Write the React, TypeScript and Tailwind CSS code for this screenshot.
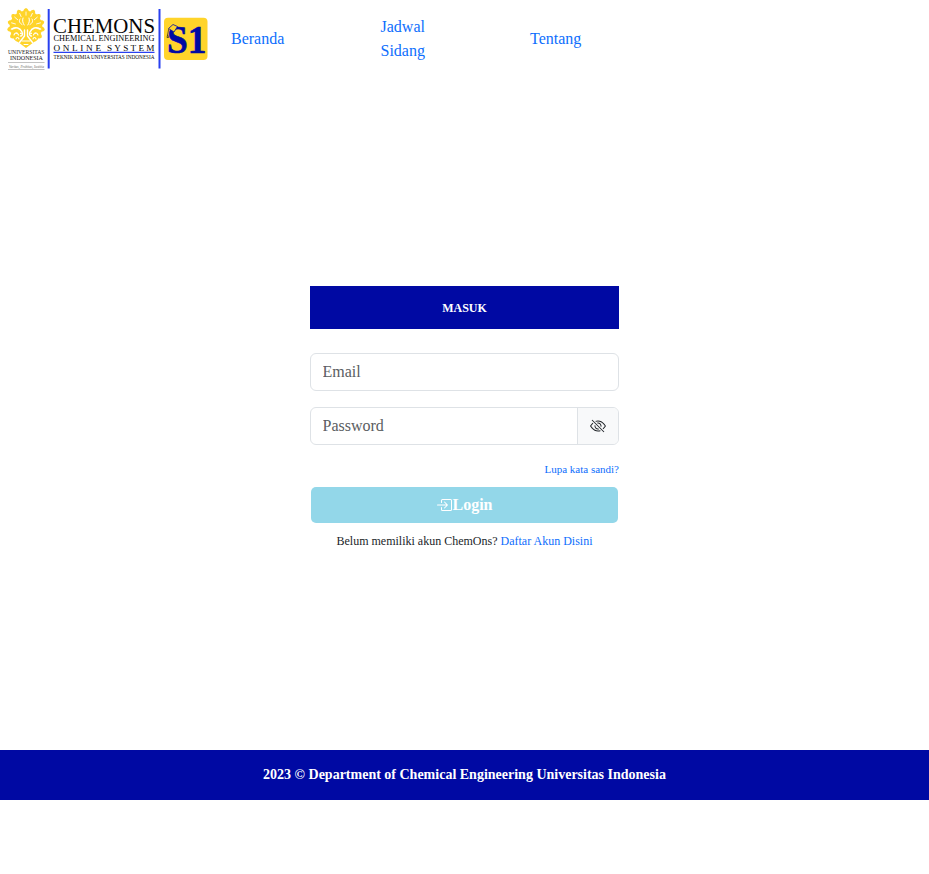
import React from "react";
import { BsBoxArrowInRight, BsEyeSlash } from "react-icons/bs";

const LEAF_ANGLES = [-124, -98, -74, -49, -25, 0, 25, 49, 74, 98, 124];

function Makara() {
  return (
    <g strokeLinecap="round" strokeLinejoin="round">
      {LEAF_ANGLES.map((angle) => (
        <g key={angle} transform={`rotate(${angle} 26 27)`}>
          <path fill="#ffd42a" d="M26 8c2.200 1 2.300 2 2.300 2.600 1.700.6 2 2 1.500 3.200.8 1.500 0 3-1 3.700L26 21l-2.800-3.500c-1-.7-1.800-2.200-1-3.700-.5-1.200-.2-2.600 1.500-3.200C23.700 10 23.800 9 26 8z" />
          <path d="M26 12v4" stroke="#fff" strokeWidth=".8" />
        </g>
      ))}
      <circle cx="26" cy="25" r="9.500" fill="#ffd42a" />
      <path fill="#ffd42a" d="M13 34h26c1 4-2 7-5 8l-8 6-8-6c-3-1-6-4-5-8z" />
      <g fill="none" stroke="#fff">
        <path strokeWidth="1" d="M20 19c-1.500 2-.5 4 2 5.500M32 19c1.500 2 .5 4-2 5.500M23 18c-1 3 0 5 1.200 7M29 18c1 3 0 5-1.200 7" />
        <path strokeWidth="1.500" d="M12 29c4-2.500 8-1 10 3 1 2.500 0 4-1.500 4M40 29c-4-2.500-8-1-10 3-1 2.500 0 4 1.500 4" />
        <path strokeWidth="1.100" d="M14 35c1-3 3.500-3 4.500 0M38 35c-1-3-3.500-3-4.500 0M16 39c.5-2 2.500-2 3 0M36 39c-.5-2-2.500-2-3 0" />
        <path strokeWidth="1.400" d="M24.500 30v6l-5 6.500M27.500 30v6l5 6.500" />
        <path strokeWidth="1" d="M22 41h8M24 44.500h4" />
      </g>
    </g>
  );
}

function Logo() {
  return (
    <svg
      width="204"
      height="64"
      viewBox="6 7 204 64"
      className="block shrink-0 font-['Liberation_Serif','Times_New_Roman',serif]"
      role="img"
      aria-label="Chemons"
    >
      <Makara />
      <g fill="#222">
        <text x="8" y="54.300" fontSize="6.300" textLength="36.500" lengthAdjust="spacingAndGlyphs">UNIVERSITAS</text>
        <text x="10" y="60.200" fontSize="6.300" textLength="33" lengthAdjust="spacingAndGlyphs">INDONESIA</text>
        <text x="9" y="68" fontSize="4.500" fontStyle="italic" fill="#666" textLength="35" lengthAdjust="spacingAndGlyphs">Veritas, Probitas, Iustitia</text>
      </g>
      <path d="M8 62.500h36.500M8 69.500h36.500" stroke="#999" strokeWidth=".6" />
      <path d="M48.700 9v59.500M159.500 9v59.500" stroke="#2940f0" strokeWidth="2" />
      <g fill="#050505">
        <text x="53" y="33" fontSize="22" textLength="102" lengthAdjust="spacingAndGlyphs">CHEMONS</text>
        <text x="53.500" y="41" fontSize="9" textLength="101" lengthAdjust="spacingAndGlyphs">CHEMICAL ENGINEERING</text>
        <text x="53.500" y="50.500" fontSize="9.200" textLength="47.500">ONLINE</text>
        <text x="107" y="50.500" fontSize="9.200" textLength="47.500">SYSTEM</text>
        <text x="53.500" y="59.300" fontSize="6.800" textLength="101" lengthAdjust="spacingAndGlyphs">TEKNIK KIMIA UNIVERSITAS INDONESIA</text>
      </g>
      <path d="M53.500 52.300h101" stroke="#2940f0" strokeWidth="1.300" />
      <rect x="164" y="17.700" width="43.500" height="42.300" rx="4" fill="#ffd42a" />
      <text
        x="167"
        y="53.300"
        fontSize="39.500"
        fontWeight="700"
        fill="#0009a3"
        stroke="#0009a3"
        strokeWidth=".6"
        textLength="39.500"
        lengthAdjust="spacingAndGlyphs"
      >
        S1
      </text>
      <path d="M168.500 28.500l4.500-4 4.500 2-3.500 5.500z" fill="#ffd42a" stroke="#0009a3" strokeWidth=".8" />
      <path d="M168.700 29l-1 5.500M167.700 34.500l-.7 3h1.600z" fill="none" stroke="#222" strokeWidth=".7" />
    </svg>
  );
}

export default function App() {
  return (
    <div className="h-[874px] overflow-hidden bg-white font-['Liberation_Serif','Times_New_Roman',serif] text-base text-[#212529]">
      <header className="flex h-[78px] items-center pl-1.5">
        <Logo />
        <nav className="ml-[21px] flex items-center text-[#0d6efd]">
          <a className="w-[149.500px]">Beranda</a>
          <a className="w-[149.500px]">Jadwal<br />Sidang</a>
          <a>Tentang</a>
        </nav>
      </header>

      <main className="mx-auto flex h-[672px] w-[309px] flex-col pt-52">
        <h1 className="flex h-[43px] items-center justify-center bg-[#0009a3] pt-px text-[12px] font-bold text-white">MASUK</h1>
        <input
          type="email"
          placeholder="Email"
          className="mt-6 h-[38px] rounded-md border border-[#dee2e6] px-[11.500px] outline-none placeholder:text-[#5a5d61]"
        />
        <div className="mt-4 flex h-[38px] overflow-hidden rounded-md border border-[#dee2e6]">
          <input
            type="password"
            placeholder="Password"
            className="min-w-0 flex-1 px-[11.500px] outline-none placeholder:text-[#5a5d61]"
          />
          <button type="button" className="flex w-[41px] items-center justify-center border-l border-[#dee2e6] bg-[#f8f9fa]">
            <BsEyeSlash size={16} />
          </button>
        </div>
        <a className="mt-4 text-right text-[11px] leading-[17px] text-[#0d6efd]">Lupa kata sandi?</a>
        <button type="button" className="mx-px mt-[9px] flex h-9 items-center justify-center rounded-[5px] bg-[#93d7e9] font-bold text-white">
          <BsBoxArrowInRight size={16} />
          Login
        </button>
        <p className="mt-[9px] text-center text-[12px] leading-[18px]">
          Belum memiliki akun ChemOns? <a className="text-[#0d6efd]">Daftar Akun Disini</a>
        </p>
      </main>

      <footer className="flex h-[50px] items-center justify-center bg-[#0009a3] text-sm font-bold text-white">
        2023 © Department of Chemical Engineering Universitas Indonesia
      </footer>
    </div>
  );
}
